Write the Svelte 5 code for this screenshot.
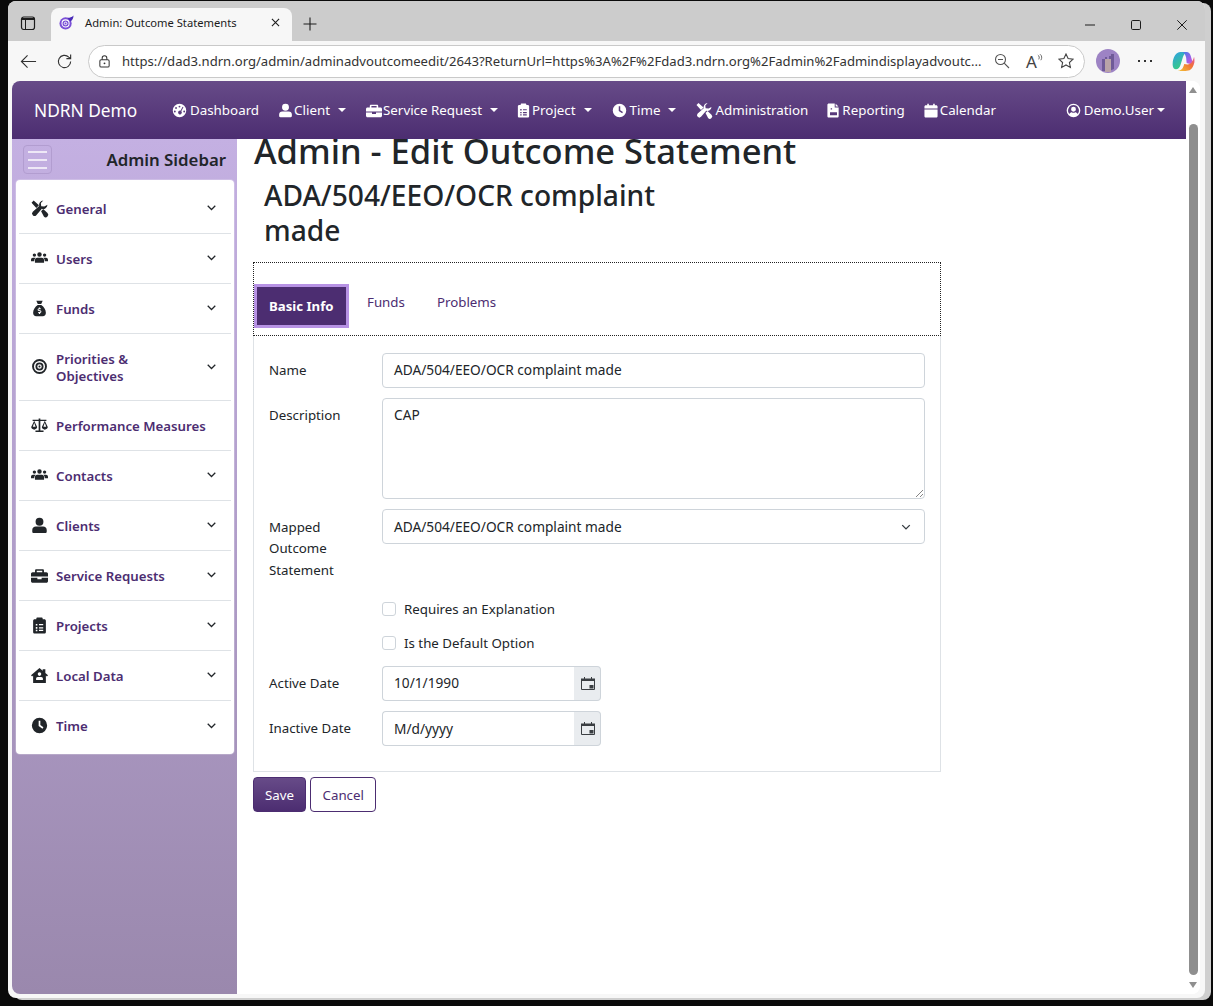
<script>
  const I = {
    tools: 'M.5 2.500L2.500.5 7.500 5 5 7.500zM9.500 10.500l2-2 4 3.700a2.400 2.400 0 0 1-3.400 3.400zM15.500 4.500a4.200 4.200 0 0 1-5.300 3.800L5 14.300a2.300 2.300 0 0 1-3.300-3.300l6-5.300A4.200 4.200 0 0 1 11.600.5L9.300 2.900l.3 2.900 2.900.3z',
    users: 'M3.200 3.200a1.600 1.600 0 1 0 0 3.200 1.600 1.600 0 0 0 0-3.200zM8 2.200a2.100 2.100 0 1 0 0 4.200 2.100 2.100 0 0 0 0-4.200zM12.800 3.200a1.600 1.600 0 1 0 0 3.200 1.600 1.600 0 0 0 0-3.200zM1.800 7.200h2.500c-.8.700-1.200 1.800-1.300 3.300H0v-1.300c0-1.200.8-2 1.800-2zM5.800 7.200h4.400c1.300 0 2.100 1 2.100 2.400v2.400H3.700V9.600c0-1.400.800-2.400 2.100-2.400zM11.700 7.200h2.500c1 0 1.800.8 1.800 2v1.300h-3c-.1-1.500-.5-2.600-1.300-3.300z',
    bag: 'M5 .8h6l-1.400 3H6.400zM6.300 4.600h3.400c2.500 1.800 4.300 4.500 4.300 7.400 0 1.900-1.100 3.200-3 3.200H5c-1.900 0-3-1.300-3-3.200 0-2.900 1.800-5.600 4.300-7.400zM7.400 7v.8c-1.600.3-1.600 2.400 0 2.600l1.300.3c.4.200.2.600-.2.600H6.800v1h.6v.8h1.200v-.8c1.600-.3 1.600-2.400 0-2.700l-1.300-.3c-.4-.1-.2-.6.200-.6h1.700V7.800h-.7V7z',
    target: 'M8 1a7 7 0 1 0 0 14A7 7 0 0 0 8 1zm0 1.800a5.200 5.200 0 1 1 0 10.400A5.200 5.200 0 0 1 8 2.800zM8 4.200a3.800 3.800 0 1 0 0 7.600 3.800 3.800 0 0 0 0-7.600zm0 1.700a2.100 2.100 0 1 1 0 4.200 2.100 2.100 0 0 1 0-4.200zM8 7a1 1 0 1 0 0 2 1 1 0 0 0 0-2z',
    scale: 'M7.200 1.500h1.600v1h5.700v1.300h-1.400l2.700 5.700c0 1.500-1.400 2.400-2.800 2.400s-2.800-.9-2.800-2.400l2.700-5.700H8.800v9h3v1.300H4.200v-1.300h3v-9H3.100l2.700 5.700c0 1.500-1.400 2.400-2.800 2.400S.2 11 .2 9.500l2.700-5.700H1.500V2.500h5.700zM3 5.300L1.700 9.200h2.600zm10 0l-1.300 3.900h2.600z',
    user: 'M8 .8a3.700 3.700 0 1 0 0 7.400A3.700 3.700 0 0 0 8 .8zM4.600 9h6.800c2 0 3.400 1.300 3.400 3.300v1.500c0 .7-.5 1.300-1.300 1.300H2.500c-.8 0-1.300-.6-1.300-1.300v-1.500C1.200 10.300 2.600 9 4.600 9z',
    brief: 'M5 2.200h6c.7 0 1.200.5 1.200 1.200V5h2.300c.8 0 1.500.7 1.500 1.400V9H0V6.400C0 5.700.7 5 1.500 5h2.300V3.400c0-.7.500-1.200 1.200-1.200zm.4 1.400V5h5.200V3.600zM0 10h6v1.500h4V10h6v3.300c0 .8-.7 1.500-1.500 1.500h-13C.7 14.800 0 14.100 0 13.300z',
    clip: 'M6 .5h4c.5 0 1 .5 1 1V2h1.500c.9 0 1.500.6 1.500 1.500v10.500c0 .9-.6 1.500-1.500 1.500h-9c-.9 0-1.500-.6-1.500-1.500V3.500C2 2.600 2.600 2 3.500 2H5v-.5c0-.5.500-1 1-1zM4.500 6.500v1.500H6V6.500zm3 .2v1.100h4V6.700zm-3 2.800V11H6V9.500zm3 .2v1.100h4V9.700zm-3 2.300v1.300H6V12zm3 .1v1.100h4v-1.100z',
    house: 'M8 1l3 2.500V2h2.500v3.600L16 7.700l-1 1.200-1-.8V15H2V8.100l-1 .8-1-1.200zM8 5a1.700 1.700 0 1 0 0 3.400A1.700 1.700 0 0 0 8 5zM6.300 9.300c-.9 0-1.500.7-1.500 1.600v1.300h6.400v-1.300c0-.9-.6-1.600-1.500-1.600z',
    clock: 'M8 .8a7.200 7.200 0 1 0 0 14.400A7.200 7.200 0 0 0 8 .8zM7.200 3.500h1.600v4.100l2.900 2.100-.9 1.300L7.200 8.500z',
    gauge: 'M8 .8a7.200 7.200 0 1 0 0 14.400A7.200 7.200 0 0 0 8 .8zM8 2.800a1 1 0 1 1 0 2 1 1 0 0 1 0-2zM4.300 4.300a1 1 0 1 1 0 2 1 1 0 0 1 0-2zM11.300 4l.9.5-2.300 4.200a2 2 0 1 1-.9-.5zM3 8a1 1 0 1 1 0 2 1 1 0 0 1 0-2zM13 8a1 1 0 1 1 0 2 1 1 0 0 1 0-2z',
    file: 'M3 .5h6.300v4.300h4.200v9.200c0 .8-.6 1.500-1.500 1.500H3c-.9 0-1.500-.7-1.500-1.500V2c0-.9.600-1.500 1.500-1.500zM10.300.7l3 3h-3zM5 5.500V7h1.500V5.500zm-.7 4.300v3.200h7.400V9.800z',
    cal: 'M4 .8h1.700v1.700h4.600V.8H12v1.700h1.500c.8 0 1.500.7 1.500 1.500v1.800H1V4c0-.8.700-1.500 1.500-1.500H4zM1 6.800h14v7.200c0 .8-.7 1.500-1.500 1.500h-11c-.8 0-1.500-.7-1.500-1.500z',
    ucircle: 'M8 .7a7.300 7.300 0 1 0 0 14.600A7.300 7.300 0 0 0 8 .7zm0 1.500a5.800 5.800 0 0 1 4.500 9.400C11.800 10.400 10.500 9.800 10 9.800c-1.300.8-2.700.8-4 0-.5 0-1.800.6-2.500 1.800A5.800 5.800 0 0 1 8 2.200zM8 4a2.600 2.600 0 1 0 0 5.200A2.600 2.600 0 0 0 8 4z'
  };

  const nav = [
    { t: 'Dashboard', i: 'gauge' },
    { t: 'Client', i: 'user', c: 1 },
    { t: 'Service Request', i: 'brief', c: 1 },
    { t: 'Project', i: 'clip', c: 1 },
    { t: 'Time', i: 'clock', c: 1 },
    { t: 'Administration', i: 'tools' },
    { t: 'Reporting', i: 'file' },
    { t: 'Calendar', i: 'cal' }
  ];

  const side = [
    { t: 'General', i: 'tools', c: 1 },
    { t: 'Users', i: 'users', c: 1 },
    { t: 'Funds', i: 'bag', c: 1 },
    { t: 'Priorities & Objectives', i: 'target', c: 1, tall: 1 },
    { t: 'Performance Measures', i: 'scale' },
    { t: 'Contacts', i: 'users', c: 1 },
    { t: 'Clients', i: 'user', c: 1 },
    { t: 'Service Requests', i: 'brief', c: 1 },
    { t: 'Projects', i: 'clip', c: 1 },
    { t: 'Local Data', i: 'house', c: 1 },
    { t: 'Time', i: 'clock', c: 1 }
  ];
</script>

{#snippet icon(name, cls)}
  <svg class={cls} viewBox="0 0 16 16" preserveAspectRatio="xMidYMid slice" aria-hidden="true"><path fill="currentColor" fill-rule="evenodd" d={I[name]} /></svg>
{/snippet}

{#snippet calendar()}
  <span class="addon">
    <svg viewBox="0 0 14 13" width="14" height="13" aria-hidden="true">
      <path fill="#3a3e42" d="M3 0h1v1.500h6V0h1v1.500h3V4H0V1.500h3z" />
      <path fill="none" stroke="#3a3e42" stroke-width="1" d="M.5 3.500v9h13v-9" />
      <rect x="8.500" y="8" width="4" height="3.500" fill="#3a3e42" />
    </svg>
  </span>
{/snippet}

<div class="desktop">
  <div class="window">
    <div class="tabstrip">
      <svg class="tabs-ico" viewBox="0 0 16 16" aria-hidden="true"><rect x="1.500" y="2" width="13" height="12.500" rx="2.200" fill="none" stroke="#1c1c1c" stroke-width="1.200" /><path d="M2 3h12v2H6v9H5V5H2z" fill="#1c1c1c" /></svg>
      <div class="tab">
        <svg class="favicon" viewBox="0 0 16 16" aria-hidden="true">
          <circle cx="7" cy="9" r="6.500" fill="#7a4fd6" />
          <circle cx="7" cy="9" r="3.800" fill="none" stroke="#fff" stroke-width="1.100" />
          <circle cx="7" cy="9" r="1.400" fill="none" stroke="#fff" stroke-width="1" />
          <path d="M9 3c2 .2 4-.3 6.500-2.500-.2 3-1 5-3.500 6.500z" fill="#4a2bb8" />
        </svg>
        <span class="tab-title">Admin: Outcome Statements</span>
        <svg class="tab-x" viewBox="0 0 10 10" aria-hidden="true"><path d="M1 1l8 8M9 1l-8 8" stroke="#1c1c1c" stroke-width="1.200" /></svg>
      </div>
      <svg class="tab-plus" viewBox="0 0 14 14" aria-hidden="true"><path d="M7 .5v13M.5 7h13" stroke="#1c1c1c" stroke-width="1.100" /></svg>
      <div class="winbtns">
        <svg viewBox="0 0 10 10" aria-hidden="true"><path d="M0 5h10" stroke="#1c1c1c" stroke-width="1" /></svg>
        <svg viewBox="0 0 10 10" aria-hidden="true"><rect x=".5" y=".5" width="9" height="9" rx="1.200" fill="none" stroke="#1c1c1c" stroke-width="1" /></svg>
        <svg viewBox="0 0 10 10" aria-hidden="true"><path d="M.3.300l9.400 9.400M9.700.300L.3 9.700" stroke="#1c1c1c" stroke-width="1" /></svg>
      </div>
    </div>

    <div class="toolbar">
      <svg class="tb-ico" viewBox="0 0 18 18" aria-hidden="true"><path d="M17 9H1.500M8 2.500L1.500 9 8 15.500" fill="none" stroke="#333" stroke-width="1.200" /></svg>
      <svg class="tb-ico reload" viewBox="0 0 18 18" aria-hidden="true"><path d="M15.500 9a6.500 6.500 0 1 1-2-4.700L15.500 6M15.500 1.500V6H11" fill="none" stroke="#333" stroke-width="1.200" /></svg>
      <div class="omnibox">
        <svg class="lock" viewBox="0 0 14 14" aria-hidden="true"><rect x="2" y="5" width="10" height="8" rx="1.500" fill="none" stroke="#333" stroke-width="1.100" /><path d="M4.500 5V3.300a2.500 2.500 0 0 1 5 0V5" fill="none" stroke="#333" stroke-width="1.100" /><circle cx="7" cy="9" r="1" fill="#333" /></svg>
        <span class="url">https://dad3.ndrn.org/admin/adminadvoutcomeedit/2643?ReturnUrl=https%3A%2F%2Fdad3.ndrn.org%2Fadmin%2Fadmindisplayadvoutc...</span>
        <svg class="omni-ico zoomout" viewBox="0 0 16 16" aria-hidden="true"><circle cx="6.500" cy="6.500" r="5" fill="none" stroke="#555" stroke-width="1.100" /><path d="M10.200 10.200L15 15M4 6.500h5" stroke="#555" stroke-width="1.100" /></svg>
        <span class="aloud">A<svg viewBox="0 0 7 10" aria-hidden="true"><path d="M1 1c2 1.500 2 3 1 5M3.500 0c2.500 2 2.500 4.500 1 7" fill="none" stroke="#444" stroke-width=".9" /></svg></span>
        <svg class="omni-ico" viewBox="0 0 16 16" aria-hidden="true"><path d="M8 1l2.100 4.600 5 .5-3.700 3.400 1 5L8 12l-4.400 2.500 1-5L.9 6.100l5-.5z" fill="none" stroke="#444" stroke-width="1.100" /></svg>
      </div>
      <svg class="avatar" viewBox="0 0 24 24" aria-hidden="true">
        <circle cx="12" cy="12" r="12" fill="#9d83c4" />
        <path d="M6 22V10h3v-2h2v14zM13 22V7h2V5h3v15z" fill="#6f5a98" />
        <rect x="9" y="10" width="6" height="13" fill="#b9a3a8" />
      </svg>
      <span class="dots"><i></i><i></i><i></i></span>
      <svg class="copilot" viewBox="0 0 24 24" aria-hidden="true">
        <defs>
          <linearGradient id="cpa" x1="0" y1="0" x2=".6" y2="1"><stop offset="0" stop-color="#2f9fe8" /><stop offset="1" stop-color="#38d07a" /></linearGradient>
          <linearGradient id="cpb" x1="0" y1="0" x2="1" y2="1"><stop offset="0" stop-color="#3f7fe8" /><stop offset=".6" stop-color="#a35ce8" /><stop offset="1" stop-color="#e864b8" /></linearGradient>
          <linearGradient id="cpc" x1="0" y1="1" x2="1" y2="0"><stop offset="0" stop-color="#f4c430" /><stop offset=".6" stop-color="#f0703a" /><stop offset="1" stop-color="#e8589a" /></linearGradient>
        </defs>
        <path d="M9 2h8c-3 .5-4.500 2-5.500 5L9 15c-.8 3-2.500 5-5 5-2.500 0-3.500-3-3.300-6C1 8 4 2 9 2z" fill="url(#cpa)" />
        <path d="M11 2h4c2.500 0 3.700 1.500 4.300 3.500L21 11c1 1.500 2.500 1.800 2.800 1-1 2-3 3-5 2.500l-3.500-1-.5-5C14.500 6 13.500 3.500 11 2z" fill="url(#cpb)" />
        <path d="M23 7c1.500 6-1 13-6 14.500-1 .3-2 .5-3 .5H6c3-.5 5-2 6-5l.8-2.500 3.200.5c3 .3 5.500-2 7-8z" fill="url(#cpc)" />
        <path d="M12 8.500c1-.8 2.300-.8 2.800-.3l-1.300 5.800c-.6.800-2.200.8-3 .3z" fill="#f7f7f7" />
      </svg>
    </div>

    <div class="page">
      <div class="viewport">
        <header class="navbar">
          <span class="brand">NDRN Demo</span>
          <nav class="links">
            {#each nav as n}
              <span class="link">{@render icon(n.i, `nav-ico ${n.i}`)}{n.t}{#if n.c}<i class="caret"></i>{/if}</span>
            {/each}
          </nav>
          <span class="link usr">{@render icon('ucircle', 'nav-ico')}Demo.User<i class="caret near"></i></span>
        </header>

        <div class="body">
          <aside class="sidebar">
            <div class="side-head">
              <span class="toggler"><i></i><i></i><i></i></span>
              <span class="side-title">Admin Sidebar</span>
            </div>
            <div class="side-card">
              {#each side as s}
                <div class="row" class:tall={s.tall}>
                  {@render icon(s.i, 'row-ico')}
                  <span class="row-t">{s.t}</span>
                  {#if s.c}
                    <svg class="chev" viewBox="0 0 16 16" aria-hidden="true"><path d="M2.500 5.500L8 11l5.500-5.500" fill="none" stroke="#212529" stroke-width="1.800" /></svg>
                  {/if}
                </div>
              {/each}
            </div>
          </aside>

          <main class="main">
            <h1>Admin - Edit Outcome Statement</h1>
            <h2>ADA/504/EEO/OCR complaint made</h2>

            <div class="tabs">
              <span class="tb active">Basic Info</span>
              <span class="tb">Funds</span>
              <span class="tb">Problems</span>
            </div>

            <section class="panel">
              <div class="f">
                <span class="lab">Name</span>
                <span class="ctl inp">ADA/504/EEO/OCR complaint made</span>
              </div>
              <div class="f">
                <span class="lab">Description</span>
                <span class="ctl area">CAP
                  <svg class="grip" viewBox="0 0 8 8" aria-hidden="true"><path d="M1 8l7-7M5 8l3-3" stroke="#666" stroke-width=".8" /></svg>
                </span>
              </div>
              <div class="f mapped">
                <span class="lab">Mapped Outcome Statement</span>
                <span class="ctl inp sel">ADA/504/EEO/OCR complaint made
                  <svg class="sel-chev" viewBox="0 0 16 16" aria-hidden="true"><path d="M3 5.500l5 5 5-5" fill="none" stroke="#343a40" stroke-width="1.800" /></svg>
                </span>
              </div>
              <div class="chk"><i class="box"></i>Requires an Explanation</div>
              <div class="chk"><i class="box"></i>Is the Default Option</div>
              <div class="f date">
                <span class="lab">Active Date</span>
                <div class="dgroup"><span class="ctl dinp">10/1/1990</span>{@render calendar()}</div>
              </div>
              <div class="f date">
                <span class="lab">Inactive Date</span>
                <div class="dgroup"><span class="ctl dinp">M/d/yyyy</span>{@render calendar()}</div>
              </div>
            </section>

            <div class="actions">
              <span class="btn save">Save</span>
              <span class="btn cancel">Cancel</span>
            </div>
          </main>
        </div>
      </div>

      <div class="scrollbar">
        <i class="up"></i>
        <i class="thumb"></i>
        <i class="down"></i>
      </div>
    </div>
  </div>
</div>

<style>
  :global(body) { margin: 0; background: #000; }
  * { box-sizing: border-box; }

  .desktop {
    width: 1213px; height: 1006px; overflow: hidden; background: #0a0a0a;
    padding: 1px 8px 8px 8px;
    font-family: "Noto Sans", "Open Sans", sans-serif; color: #212529; font-size: 13.300px;
  }
  .window {
    height: 997px; background: #f7f7f7; border-radius: 8px;
    display: flex; flex-direction: column; overflow: hidden;
    box-shadow: 6px 2px 0 #cfcfcf;
  }

  .tabstrip { height: 40px; background: #cccccc; display: flex; align-items: flex-end; flex: none; }
  .tabs-ico { width: 16px; height: 16px; margin: 0 0 10px 12px; flex: none; }
  .tab {
    width: 241px; height: 33px; margin-left: 15px; background: #f7f7f7; border-radius: 8px 8px 0 0;
    display: flex; align-items: center; padding: 0 0 4px 8px; flex: none;
  }
  .favicon { width: 15px; height: 15px; flex: none; }
  .tab-title { margin-left: 11px; font-size: 11.200px; color: #1c1c1c; width: 186px; white-space: nowrap; }
  .tab-x { width: 9px; height: 9px; }
  .tab-plus { width: 14px; height: 14px; margin: 0 0 10px 11px; }
  .winbtns { margin-left: auto; display: flex; gap: 36px; padding: 0 18px 11px 0; }
  .winbtns svg { width: 10px; height: 10px; }

  .toolbar { height: 40px; flex: none; display: flex; align-items: center; padding-left: 12px; background: #f7f7f7; }
  .tb-ico { width: 17px; height: 17px; flex: none; }
  .reload { margin-left: 19px; }
  .omnibox {
    margin-left: 15px; width: 997px; height: 33px; flex: none; border: 1px solid #c9c9c9; border-radius: 17px; background: #fff;
    display: flex; align-items: center; padding: 0 11px 0 9px;
  }
  .lock { width: 13px; height: 13px; flex: none; }
  .url { margin-left: 11px; font-size: 13.100px; color: #333; white-space: nowrap; width: 862px; overflow: hidden; flex: none; }
  .omni-ico { width: 16px; height: 16px; flex: none; }
  .zoomout { margin-left: 10px; }
  .aloud { width: 20px; margin: 0 12px 0 16px; font-size: 17px; color: #444; display: flex; align-items: flex-start; line-height: 1; flex: none; }
  .aloud svg { width: 6px; height: 9px; margin-top: 1px; }
  .avatar { width: 24px; height: 24px; margin-left: 11px; flex: none; }
  .dots { margin-left: 18px; display: flex; gap: 4px; }
  .dots i { width: 2px; height: 2px; background: #333; display: block; }
  .copilot { width: 23px; height: 23px; margin-left: 20px; flex: none; }

  .page { flex: 1; min-height: 0; display: flex; margin: 0 5px 4px 4px; background: #fff; border-radius: 8px; overflow: hidden; }
  .viewport { width: 1174px; flex: none; display: flex; flex-direction: column; }

  .navbar {
    height: 58px; flex: none; display: flex; align-items: center; padding: 0 21px 0 22px;
    background: linear-gradient(#674b88, #4c2d71); color: #fff;
  }
  .brand { font-size: 17.300px; width: 138px; white-space: nowrap; }
  .links { display: flex; gap: 20px; }
  .link { display: flex; align-items: center; white-space: nowrap; font-size: 13.350px; color: #fff; }
  .usr { margin-left: auto; }
  .nav-ico { width: 15px; height: 15px; margin-right: 3px; flex: none; color: #fff; overflow: visible; }
  .nav-ico.user { width: 13px; margin-right: 2px; }
  .nav-ico.brief { width: 16px; margin-right: 1px; }
  .nav-ico.clip, .nav-ico.file { width: 11px; }
  .nav-ico.tools { width: 16px; }
  .nav-ico.cal { width: 12px; }
  .caret { width: 0; height: 0; border: 4px solid transparent; border-top-color: #fff; border-bottom: 0; margin-left: 8px; display: block; }
  .caret.near { margin-left: 3px; }

  .body { flex: 1; min-height: 0; display: flex; }
  .sidebar { width: 225px; flex: none; background: linear-gradient(#c4b0e2, #9a88ad); padding: 0 3px 0 4px; }
  .side-head { height: 41px; display: flex; align-items: center; justify-content: space-between; padding: 0 8px 0 7px; }
  .toggler {
    width: 29px; height: 29px; border: 1px solid #b29dd0; border-radius: 4px; display: flex; flex-direction: column; justify-content: center; gap: 6px; padding: 0 4px;
  }
  .toggler i { height: 2px; background: #eee8f6; display: block; }
  .side-title { font-size: 16.800px; font-weight: 600; color: #212529; }
  .side-card { background: #fff; border-radius: 4px; padding: 4px 3px 3px; height: 574px; box-shadow: 0 0 0 1px rgba(255,255,255,.2); }
  .row { height: 50px; display: flex; align-items: center; padding: 0 14px 0 12px; border-bottom: 1px solid #dee2e6; }
  .row:last-child { border-bottom: 0; }
  .row.tall { height: 67px; }
  .row-ico { width: 17px; height: 17px; flex: none; color: #212529; margin: -1px 8px 0 0; overflow: visible; }
  .row-t { font-size: 13.250px; font-weight: 600; color: #4c2d71; line-height: 17px; flex: 1; padding-top: 1px; }
  .chev { width: 11px; height: 11px; flex: none; margin-top: -2px; }
  .tall .row-t { padding-right: 40px; }

  .main { flex: 1; min-width: 0; padding: 0 0 0 17px; overflow: hidden; }
  h1 { font-size: 34.500px; font-weight: 500; line-height: 24px; margin: 0; height: 26px; white-space: nowrap; color: #212529; }
  h2 { font-size: 28.150px; font-weight: 500; line-height: 35px; width: 440px; margin: 13px 0 0 10px; color: #212529; }
  .tabs {
    width: 688px; height: 74px; margin: 14px 0 0 -1px; border: 1px dotted #222; display: flex; align-items: flex-start; padding-top: 21px;
  }
  .tb { color: #4c2d71; font-size: 13.300px; padding: 9px 16px 0; height: 43px; line-height: 18px; }
  .tb.active {
    background: #4c2d71; color: #fff; font-weight: 700; font-size: 13.200px; border: 3px solid #b792e4; padding: 10px 12px 0; margin-right: 2px; height: 44px; width: 95px; white-space: nowrap;
  }
  .panel {
    width: 688px; height: 436px; margin-left: -1px; border: 1px solid #dee2e6; border-top: 0; padding: 17px 15px 0; display: flex; flex-direction: column;
  }
  .f { display: grid; grid-template-columns: 113px 1fr; margin-bottom: 10px; }
  .lab { font-size: 13.300px; line-height: 21.600px; padding-top: 7px; }
  .mapped .lab { padding: 7.600px 45px 0 0; }
  .ctl { border: 1px solid #ced4da; border-radius: 4px; font-size: 13.700px; background: #fff; padding: 0 11px 2px; color: #212529; position: relative; }
  .inp { height: 35px; display: flex; align-items: center; }
  .sel { padding-bottom: 0; }
  .area { height: 101px; padding-top: 5px; line-height: 21px; }
  .sel-chev { width: 12px; height: 12px; margin: 0 1px 0 auto; }
  .grip { width: 8px; height: 8px; position: absolute; right: 1px; bottom: 1px; }
  .mapped { height: 89px; margin-bottom: 0; }
  .chk { display: flex; align-items: center; height: 21px; margin-left: 113px; font-size: 13.300px; margin-bottom: 13px; }
  .box { width: 14px; height: 14px; border: 1px solid #ced4da; border-radius: 3px; background: #fff; margin-right: 8px; display: block; flex: none; }
  .dgroup { display: flex; width: 219px; height: 35px; }
  .dinp { flex: 1; border-radius: 4px 0 0 4px; display: flex; align-items: center; border-right: 0; }
  .date + .date .dinp { padding-bottom: 0; }
  .addon { width: 27px; border: 1px solid #ced4da; border-left: 0; border-radius: 0 4px 4px 0; background: #e9ecef; display: flex; align-items: center; justify-content: center; padding-left: 1px; }
  .actions { display: flex; gap: 4px; margin: 5px 0 0 -1px; }
  .btn { height: 35px; border-radius: 4px; display: flex; align-items: center; font-size: 13.300px; padding: 0 11px; }
  .save { background: linear-gradient(#674b88, #4c2d71); color: #fff; border: 1px solid #4c2d71; }
  .cancel { background: #fff; color: #4c2d71; border: 1px solid #4c2d71; padding: 0 11.500px; }

  .scrollbar { flex: 1; background: #fff; display: flex; flex-direction: column; align-items: center; padding: 6px 0 6px; }
  .up { width: 0; height: 0; border: 4px solid transparent; border-bottom: 6px solid #8f8f8f; border-top: 0; display: block; }
  .thumb { flex: 1; width: 9px; background: #8f8f8f; border-radius: 5px; margin: 31px 0 7px; display: block; }
  .down { width: 0; height: 0; border: 4px solid transparent; border-top: 6px solid #8f8f8f; border-bottom: 0; display: block; }
</style>
